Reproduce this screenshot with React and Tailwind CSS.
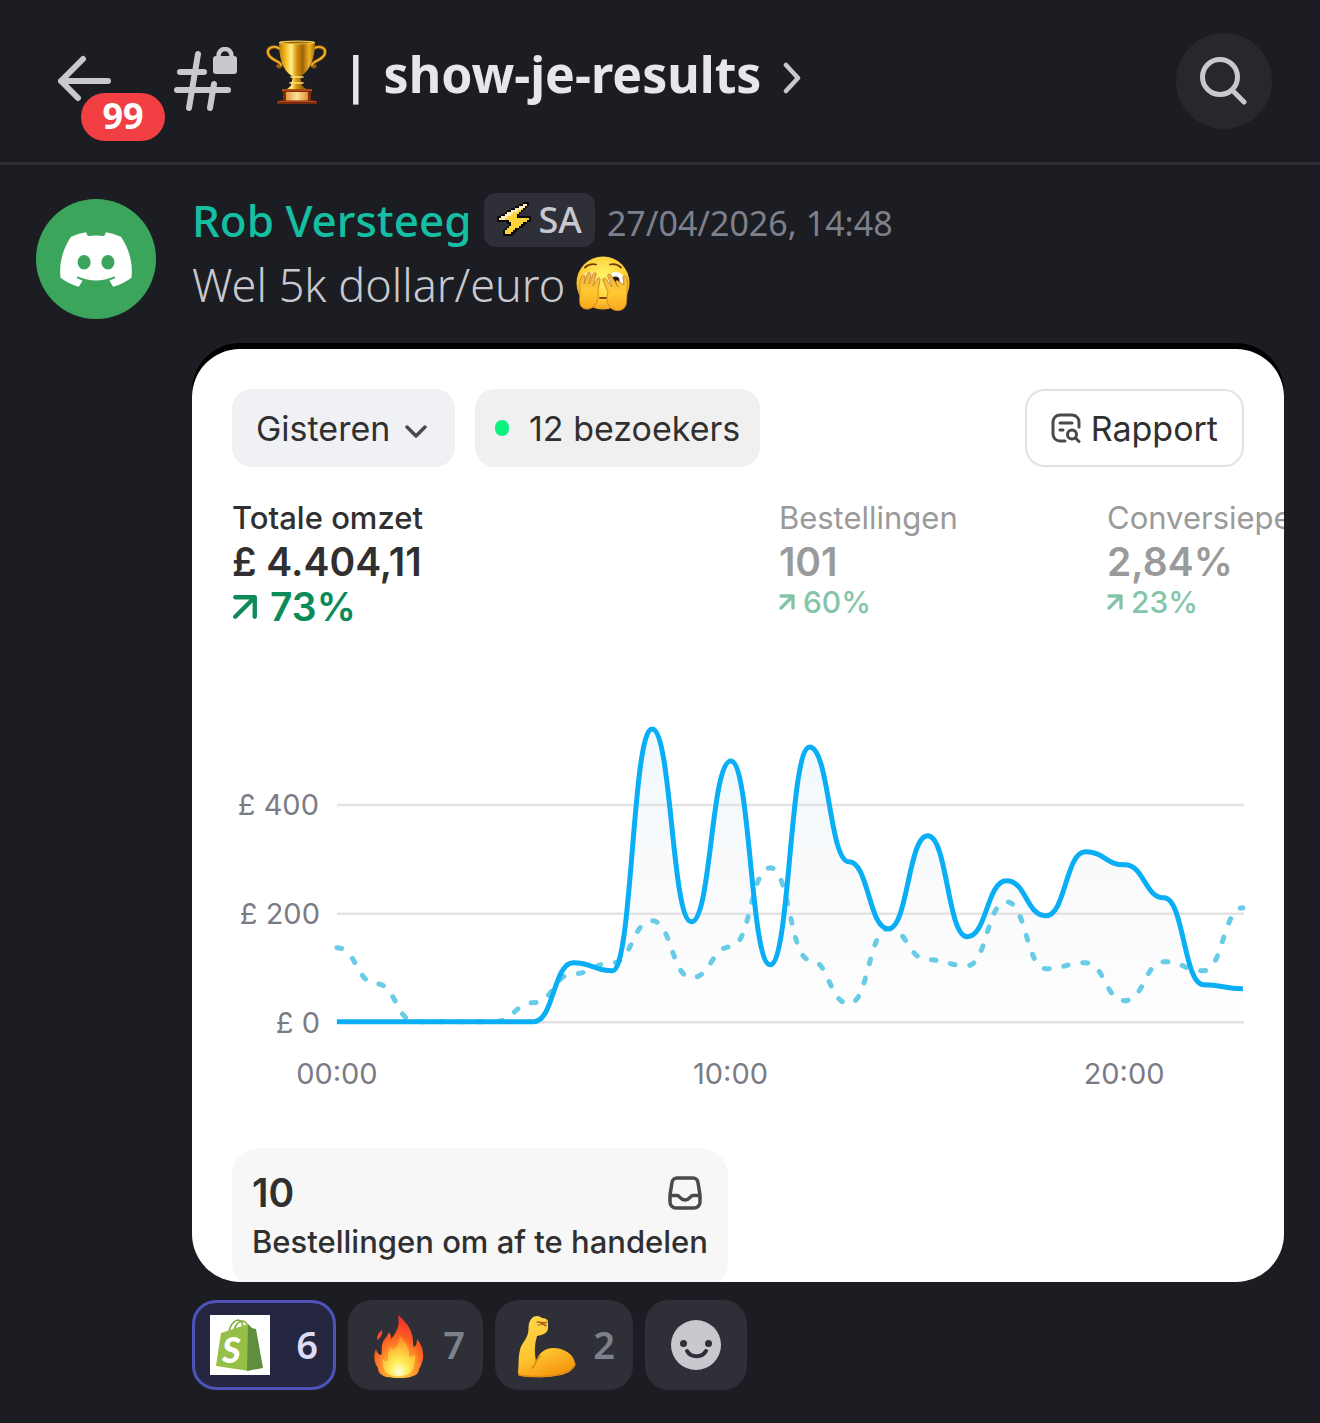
import React, { useState } from "react";
import { FaDiscord } from "react-icons/fa";

const omzet = [1022, 1022, 1022, 1022, 1022, 1022, 963, 971, 729, 922, 761, 965, 747, 862, 929, 836, 937, 881, 916, 852, 865, 898, 985, 989];
const vorige = [948, 984, 1022, 1022, 1022, 1003, 974, 963, 921, 978, 947, 868, 960, 1004, 929, 960, 966, 902, 969, 963, 1001, 962, 971, 908];

// The plot starts at x = 105 and has one point per hour
const HOUR = 39.43;
const CHART_TOP = 700;

const toPath = (values) =>
  values
    .map((v, i) => {
      const x = 105 + i * HOUR;
      const y = v - CHART_TOP;
      if (i === 0) return `M${x} ${y}`;
      const mid = x - HOUR / 2;
      return `C${mid} ${values[i - 1] - CHART_TOP} ${mid} ${y} ${x} ${y}`;
    })
    .join(" ");

const boltPixels = [
  ".............kkk..",
  "...........kkllk..",
  ".........kklllk...",
  ".......kklllyk....",
  ".....kklllyyk.....",
  "....klllyyyk......",
  "..kklllyyyk.......",
  "kklllyyyyykkkkkkk.",
  "klllyyyyyyyyyyyyk.",
  "kkkkkkyyyyyyyyykk.",
  ".....kkyyyyyykk...",
  "......kyyyyykk....",
  ".....kyyyyykk.....",
  "....kyyyykk.......",
  "...kyyyykk........",
  "...kyyykk.........",
  "...kkkkk..........",
];
const boltColors = { k: "#0b0b0d", l: "#fdeebb", y: "#fdd33c" };

function Bolt() {
  return (
    <svg className="w-9 h-9" viewBox="0 0 18 18" shapeRendering="crispEdges" aria-hidden="true">
      {boltPixels.map((row, y) =>
        row.split("").map((c, x) => boltColors[c] && <rect key={`${x}-${y}`} x={x} y={y} width="1" height="1" fill={boltColors[c]} />)
      )}
    </svg>
  );
}

function Trophy() {
  return (
    <svg className="w-[62px] h-16 mb-1 shrink-0" viewBox="0 0 62 64" role="img" aria-label="Trofee">
      <defs>
        <linearGradient id="cup" x1="0" x2="1">
          <stop offset="0" stopColor="#b87a0c" />
          <stop offset=".18" stopColor="#f3b91f" />
          <stop offset=".34" stopColor="#fff08a" />
          <stop offset=".48" stopColor="#d99a10" />
          <stop offset=".66" stopColor="#9c6206" />
          <stop offset=".84" stopColor="#f0b422" />
          <stop offset="1" stopColor="#a76a08" />
        </linearGradient>
        <linearGradient id="plate" x1="0" x2="1">
          <stop offset="0" stopColor="#e39a3c" />
          <stop offset=".5" stopColor="#ffe09a" />
          <stop offset="1" stopColor="#e08e30" />
        </linearGradient>
      </defs>
      <g fill="none" strokeLinecap="round">
        <path d="M14 9C9 5 1 7 2 13c1 7 13 8 13 12 0 2-2 2-3 1" stroke="#9a5f0a" strokeWidth="3.4" />
        <path d="M14 9C9 5 1 7 2 13c1 7 13 8 13 12" stroke="#efb52c" strokeWidth="1.8" />
        <path d="M47 9c5-4 13-2 12 4-1 7-13 8-13 12 0 2 2 2 3 1" stroke="#9a5f0a" strokeWidth="3.4" />
        <path d="M47 9c5-4 13-2 12 4-1 7-13 8-13 12" stroke="#efb52c" strokeWidth="1.8" />
      </g>
      <path d="M13 2c0 15 3 28 13 34 1 3 0 5-1 7 1 2 0 3-4 6h19c-4-3-5-4-4-6-1-2-2-4-1-7C45 30 49 17 49 2z" fill="url(#cup)" />
      <ellipse cx="31" cy="2.4" rx="18" ry="1.9" fill="#f7cf4d" />
      <ellipse cx="31" cy="2.6" rx="15" ry="1" fill="#9d6a10" />
      <path d="M25 37h12M24 43h13" stroke="#ffe070" strokeWidth="1.6" strokeLinecap="round" />
      <path d="M16 49h30v3h-1v8l6 1v3H11v-3l6-1v-8h-1z" fill="#7c2b0c" />
      <path d="M16 49h30v2H16zM12 61h38v1H12z" fill="#b24a17" />
      <rect x="20" y="52" width="22" height="8.500" fill="url(#plate)" />
    </svg>
  );
}

function PeekFace() {
  return (
    <svg className="w-14 h-14 mb-1 shrink-0" viewBox="0 0 56 56" role="img" aria-label="Gluurend gezicht">
      <defs>
        <radialGradient id="face" cx=".5" cy=".38" r=".65">
          <stop offset="0" stopColor="#fff36b" />
          <stop offset=".6" stopColor="#ffd43a" />
          <stop offset="1" stopColor="#f39a1b" />
        </radialGradient>
        <linearGradient id="hand" x1="0" y1="0" x2="0" y2="1">
          <stop offset="0" stopColor="#e9b345" />
          <stop offset=".5" stopColor="#ffc933" />
          <stop offset="1" stopColor="#fba81c" />
        </linearGradient>
      </defs>
      <circle cx="28" cy="28" r="26.500" fill="url(#face)" />
      <path d="M10 12.500c3-3 7-4 11-3M35 9.500c4-1 8 0 11 3" fill="none" stroke="#6d3c0a" strokeWidth="1.800" strokeLinecap="round" />
      <ellipse cx="14" cy="25" rx="8" ry="7.500" fill="#fff" />
      <ellipse cx="41" cy="25" rx="8" ry="8" fill="#fff" />
      <circle cx="40.500" cy="25.500" r="4" fill="#2b1a12" />
      <path d="M25 43h6" stroke="#85440b" strokeWidth="2" fill="none" strokeLinecap="round" />
      <g fill="url(#hand)" stroke="#c97d1c" strokeWidth=".8" strokeLinejoin="round">
        <path d="M5 34c-1-5 0-10 2-13 1-2 4-1 3 1l-1 7 3-10c1-2 4-2 4 1l-2 9 4-10c1-2 4-1 3 1l-3 11 4-7c1-2 4-1 3 1l-2 11c1 6-1 13-5 16-5 4-12 2-13-3-1-4 0-9 0-15z" />
        <path d="M52 34c1-5 1-9-1-12-1-2-4-1-3 1l1 7-6-4c-1-1-3 0-2 2l2 4-7-12c-1-2-4-1-3 2l4 10-6-8c-2-2-4 0-3 2l5 11c-2 6-1 13 4 17 5 3 12 2 14-4 1-4 1-10 1-16z" />
      </g>
    </svg>
  );
}

function Fire() {
  return (
    <svg className="w-[50px] h-16 mt-1 shrink-0" viewBox="0 0 50 64" role="img" aria-label="Vuur">
      <defs>
        <radialGradient id="flame" cx=".5" cy=".88" r=".8">
          <stop offset="0" stopColor="#ffe04a" />
          <stop offset=".4" stopColor="#ff9a2b" />
          <stop offset=".7" stopColor="#fb5a22" />
          <stop offset="1" stopColor="#f0342b" />
        </radialGradient>
        <radialGradient id="core" cx=".5" cy=".9" r=".9">
          <stop offset="0" stopColor="#fffde0" />
          <stop offset=".3" stopColor="#ffee55" />
          <stop offset=".65" stopColor="#ffb838" />
          <stop offset="1" stopColor="#ff7d2c" />
        </radialGradient>
      </defs>
      <path d="M24 0c7 6 14 13 15 25 0 3 0 6 1 7 2-1 3-4 3-8 5 6 7 13 6 20-1 4-2 7-4 10 0 3-2 6-6 7-4 2-9 2-14 2S12 63 8 60c-3-2-4-4-4-7C0 47-1 41 2 34c1 4 3 6 5 6 2-2-1-9 3-15 2-3 4-5 5-8 2 2 2 5 2 7 6-7 9-14 7-24z" fill="url(#flame)" />
      <path d="M8 15c1 4-1 7-4 10-2-2-1-6 4-10z" fill="#f04a30" />
      <path d="M25 20c6 6 11 13 10 21 1 2 4 0 6-2 1 8-1 14-4 18-4 5-20 6-25 0-3-4-4-8-3-13 2 2 4 3 5 1 0-4-1-9 3-13 1 2 2 3 4 2 3-4 5-8 4-14z" fill="url(#core)" />
    </svg>
  );
}

function Biceps() {
  return (
    <svg className="w-[58px] h-16 mt-1 shrink-0" viewBox="0 0 58 64" role="img" aria-label="Gespierde arm">
      <defs>
        <linearGradient id="arm" x1="0" y1="0" x2=".4" y2="1">
          <stop offset="0" stopColor="#ffd94f" />
          <stop offset=".65" stopColor="#fec52f" />
          <stop offset="1" stopColor="#f79d14" />
        </linearGradient>
      </defs>
      <path d="M11 9c1-5 4-8 8-8 2 0 4 1 5 2 3 0 5 1 6 3v7c0 5-5 7-11 8-2 7-3 15-1 25 3-8 9-13 17-13 12 0 21 7 22 15 0 8-10 12-20 13-10 2-24 1-33 0-3 0-4-2-4-4 1-7 0-15 2-22 1-6 7-11 8-17 1-4 0-6 1-9z" fill="url(#arm)" />
      <path d="M18 46c0 3-2 5-4 7M18 46c1-1 3-3 4-5" stroke="#d98512" strokeWidth="1.400" fill="none" strokeLinecap="round" />
      <path d="M1 60c10 2 28 2 36 0 10-2 18-5 20-11" stroke="#e38a12" strokeWidth="1.600" fill="none" strokeLinecap="round" />
      <path d="M19 7c2-1 4 2 10 0M20 10l8-1M21 7l7 4" stroke="#9c5a12" strokeWidth="1.200" fill="none" strokeLinecap="round" />
    </svg>
  );
}

function ShopifyBag() {
  return (
    <svg className="w-[60px] h-[60px] shrink-0" viewBox="0 0 60 60" role="img" aria-label="Shopify">
      <rect width="60" height="60" fill="#fff" />
      <g fill="none" stroke="#7fae3c" strokeWidth="1.700">
        <path d="M19 17c1-6 4-11 9-12 4 0 5 4 5 10" />
        <path d="M24 15c2-6 5-9 9-9 3 1 5 4 6 8" />
      </g>
      <path d="M11 18l27-9 1 47L6 51z" fill="#95bf47" />
      <path d="M38 9l4 4 4 1 7 39-16 3z" fill="#5e8e3e" />
      <text x="12" y="48" fill="#fff" className="font-['Lato'] font-black italic text-[36px]">S</text>
    </svg>
  );
}

function Smiley() {
  return (
    <svg className="w-[50px] h-[50px]" viewBox="0 0 50 50" aria-hidden="true">
      <circle cx="25" cy="25" r="25" fill="#c8c9cf" />
      <circle cx="12.500" cy="23.500" r="3.500" fill="#2f3037" />
      <circle cx="37.500" cy="23.500" r="3.500" fill="#2f3037" />
      <path d="M16 31c4 7 15 7 19 0" fill="none" stroke="#2f3037" strokeWidth="4" strokeLinecap="round" />
    </svg>
  );
}

function TrendArrow({ className }) {
  return (
    <svg className={className} viewBox="0 0 24 24" fill="none" stroke="currentColor" strokeLinecap="round" strokeLinejoin="round" aria-hidden="true">
      <path d="M3 3h18v18M21 3L3 21" />
    </svg>
  );
}

function Header() {
  return (
    <header className="flex justify-between items-center h-[165px] pl-14 pr-12 border-b-3 border-[#2d2e34]">
      <div className="flex items-center pb-1.5">
        <button className="relative w-14 h-12 mr-[62px]" aria-label="Terug, 99 meldingen">
          <svg className="w-14 h-12" viewBox="0 0 56 48" fill="none" stroke="#c8c9cf" strokeWidth="6" strokeLinecap="round" strokeLinejoin="round" aria-hidden="true">
            <path d="M27 5L5 27l17 17M5 27h47" />
          </svg>
          <span className="absolute left-[25px] top-[39px] w-[84px] h-12 rounded-full bg-[#f23f43] text-white text-[36px] leading-[46px] font-bold text-center">99</span>
        </button>
        {/* Private channel */}
        <svg className="w-16 h-16 mt-0.5 mr-7 shrink-0" viewBox="0 0 64 64" fill="none" stroke="#c8c9cf" strokeWidth="6" strokeLinecap="round" aria-hidden="true">
          <path d="M24 7l-9 54M40 37l-4 24M6 25h24M3 43h51" />
          <rect x="39" y="9" width="24" height="18" rx="3" fill="#c8c9cf" stroke="none" />
          <path d="M44.500 11V8.500a6.500 6.500 0 0113 0V11" strokeWidth="4.500" />
        </svg>
        <h1 className="flex items-center gap-[14px] mb-2 text-[#e6e7ed] text-[50px] leading-[60px] font-bold">
          <Trophy />
          <span>|</span>
          <a href="#" className="flex items-center gap-[22px]">
            show-je-results
            <svg className="w-5 h-8 mt-2" viewBox="0 0 20 32" fill="none" stroke="#c8c9cf" strokeWidth="4.500" strokeLinecap="round" strokeLinejoin="round" aria-hidden="true">
              <path d="M3 3l12 13L3 29" />
            </svg>
          </a>
        </h1>
      </div>
      <button className="flex items-center justify-center w-24 h-24 rounded-full bg-[#27282e]" aria-label="Zoeken">
        <svg className="w-12 h-12" viewBox="0 0 48 48" fill="none" stroke="#c8c9cf" strokeWidth="5" strokeLinecap="round" aria-hidden="true">
          <circle cx="20" cy="20" r="17.500" />
          <path d="M33 34L44 45" />
        </svg>
      </button>
    </header>
  );
}

function Stat({ label, value, change, active }) {
  return (
    <div className={active ? "text-[#303030]" : "text-[#9a9a9a]"}>
      <p className={active ? "text-[31px] leading-[44px] font-medium" : "text-[31px] leading-[44px]"}>{label}</p>
      <p className="text-[39px] leading-[44px] font-semibold">{value}</p>
      {active ? (
        <p className="flex items-center gap-3 text-[39px] leading-[46px] font-semibold text-[#0c8a57]">
          <TrendArrow className="w-[26px] h-[26px] stroke-[4]" />
          {change}
        </p>
      ) : (
        <p className="flex items-center gap-2 text-[30px] leading-9 font-medium text-[#84c5a9]">
          <TrendArrow className="w-4 h-4 stroke-[5]" />
          {change}
        </p>
      )}
    </div>
  );
}

function Chart() {
  const line = toPath(omzet);
  return (
    <svg className="w-full h-auto mt-[70px] overflow-visible font-['Inter'] text-[29px]" viewBox="0 0 1013 400" role="img" aria-label="Totale omzet per uur">
      <defs>
        <linearGradient id="area" x1="0" y1="0" x2="0" y2="1">
          <stop offset="0" stopColor="#edf8fd" stopOpacity=".9" />
          <stop offset=".45" stopColor="#f8f9fb" stopOpacity=".9" />
          <stop offset="1" stopColor="#fefefe" />
        </linearGradient>
      </defs>
      <path d={`${line} V322 H105Z`} fill="url(#area)" />
      <path d="M105 105h908M105 214h908M105 322.500h908" stroke="#e3e3e3" strokeWidth="2.500" />
      <g fill="#7b7b85">
        <text x="87" y="115" textAnchor="end">£ 400</text>
        <text x="88" y="224" textAnchor="end">£ 200</text>
        <text x="88" y="333" textAnchor="end">£ 0</text>
        <text x="105" y="384" textAnchor="middle">00:00</text>
        <text x="499" y="384" textAnchor="middle">10:00</text>
        <text x="893" y="384" textAnchor="middle">20:00</text>
      </g>
      <path d={toPath(vorige)} fill="none" stroke="#69cce6" strokeWidth="5" strokeLinecap="round" strokeDasharray="4.800 14.800" />
      <path d={line} fill="none" stroke="#0aaef5" strokeWidth="5" strokeLinejoin="round" />
    </svg>
  );
}

function Dashboard() {
  return (
    <section className="mt-7 pt-1.5 rounded-[48px] bg-black overflow-hidden">
      <div className="px-10 pt-10 rounded-t-[48px] bg-white overflow-hidden font-['Inter'] text-[#303030]">
        <div className="flex items-center gap-5 text-[34px]">
          <div className="relative">
            <select aria-label="Periode" className="appearance-none h-[78px] pl-6 pr-16 rounded-[20px] bg-[#f0f1f4]">
              <option>Gisteren</option>
            </select>
            <svg className="absolute right-7 top-8 w-[22px] h-5 pointer-events-none" viewBox="0 0 22 20" fill="none" stroke="#4a4a4a" strokeWidth="3.500" strokeLinecap="round" strokeLinejoin="round" aria-hidden="true">
              <path d="M2 6l9 9 9-9" />
            </svg>
          </div>
          <p className="flex items-center h-[78px] px-5 gap-5 rounded-[20px] bg-[#f0f0f0]">
            <span className="w-[14px] h-4 rounded-full bg-[#0bf07f]" />
            12 bezoekers
          </p>
          <button className="flex items-center gap-2.5 h-[78px] ml-auto px-6 rounded-[20px] border-2 border-[#e3e3e3]">
            <svg className="w-[30px] h-[30px]" viewBox="0 0 30 30" fill="none" stroke="#4a4a4a" strokeWidth="3" strokeLinecap="round" aria-hidden="true">
              <path d="M14 28H9a7 7 0 01-7-7V9a7 7 0 017-7h12a7 7 0 017 7v5M9 10h12M9 17h3" />
              <circle cx="21" cy="21.500" r="4.500" />
              <path d="M24.500 25L28 28.500" />
            </svg>
            Rapport
          </button>
        </div>

        <div className="grid grid-cols-[5fr_3fr_177px] mt-[29px] -mr-10 whitespace-nowrap">
          <Stat label="Totale omzet" value="£ 4.404,11" change="73%" active />
          <Stat label="Bestellingen" value="101" change="60%" />
          <Stat label="Conversiepe" value="2,84%" change="23%" />
        </div>

        <Chart />

        <div className="w-[496px] mt-12 -mb-2 px-5 pt-5 pb-6 rounded-[28px] bg-[#f7f7f7]">
          <div className="flex justify-between items-center pr-1.5">
            <p className="text-[39px] leading-[50px] font-semibold">10</p>
            <svg className="w-[34px] h-[34px]" viewBox="0 0 34 34" fill="none" stroke="#4a4a4a" strokeWidth="3.500" strokeLinejoin="round" aria-hidden="true">
              <path d="M9 2h16a5 5 0 015 4.500L32 19v7a6 6 0 01-6 6H8a6 6 0 01-6-6v-7L4 6.500A5 5 0 019 2z" />
              <path d="M2 19.500h7c3 0 3 4.500 8 4.500s5-4.500 8-4.500h7" />
            </svg>
          </div>
          <p className="text-[31px] leading-[48px] font-medium whitespace-nowrap">Bestellingen om af te handelen</p>
        </div>
      </div>
    </section>
  );
}

function Reactions() {
  const [mine, setMine] = useState(true);

  return (
    <div className="flex gap-3 mt-[18px] text-[38px] font-semibold text-[#7e808b]">
      <button
        onClick={() => setMine(!mine)}
        aria-pressed={mine}
        className="flex items-center justify-between w-36 h-[90px] px-[15px] rounded-3xl border-3 border-[#4d53b8] bg-[#25263f] text-[#dcdcf8]"
      >
        <ShopifyBag />
        6
      </button>
      <button className="flex items-center justify-between w-[135px] h-[90px] pl-[26px] pr-[18px] rounded-3xl bg-[#2f3037]">
        <Fire />
        7
      </button>
      <button className="flex items-center justify-between w-[138px] h-[90px] pl-[23px] pr-[18px] rounded-3xl bg-[#2f3037]">
        <Biceps />
        2
      </button>
      <button className="flex items-center justify-center w-[102px] h-[90px] rounded-3xl bg-[#2f3037]" aria-label="Reactie toevoegen">
        <Smiley />
      </button>
    </div>
  );
}

function App() {
  return (
    <div className="min-h-screen bg-[#1c1d22] font-['Noto_Sans',sans-serif]">
      <Header />
      <main className="flex gap-9 px-9 pt-7 pb-8">
        <div className="flex items-center justify-center w-[120px] h-[120px] mt-1.5 shrink-0 rounded-full bg-[#3ba55c]">
          <FaDiscord className="w-[78px] h-[63px] text-white" />
        </div>
        <article className="flex-1 min-w-0">
          <div className="flex items-center h-[54px]">
            <h2 className="text-[44px] leading-[54px] font-medium text-[#14bfa3]">Rob Versteeg</h2>
            <span className="flex items-center gap-1.5 h-[54px] ml-3 px-[13px] rounded-xl bg-[#2f3037] text-[36px] font-medium text-[#c8c9cf]">
              <Bolt />
              SA
            </span>
            <time className="ml-3 pt-1.5 text-[34px] text-[#7e808b]">27/04/2026, 14:48</time>
          </div>
          <p className="flex items-center gap-2.5 mt-2 h-[60px] text-[45px] leading-[60px] font-light text-[#c8c9cf]">
            Wel 5k dollar/euro
            <PeekFace />
          </p>
          <Dashboard />
          <Reactions />
        </article>
      </main>
    </div>
  );
}

export default App;
